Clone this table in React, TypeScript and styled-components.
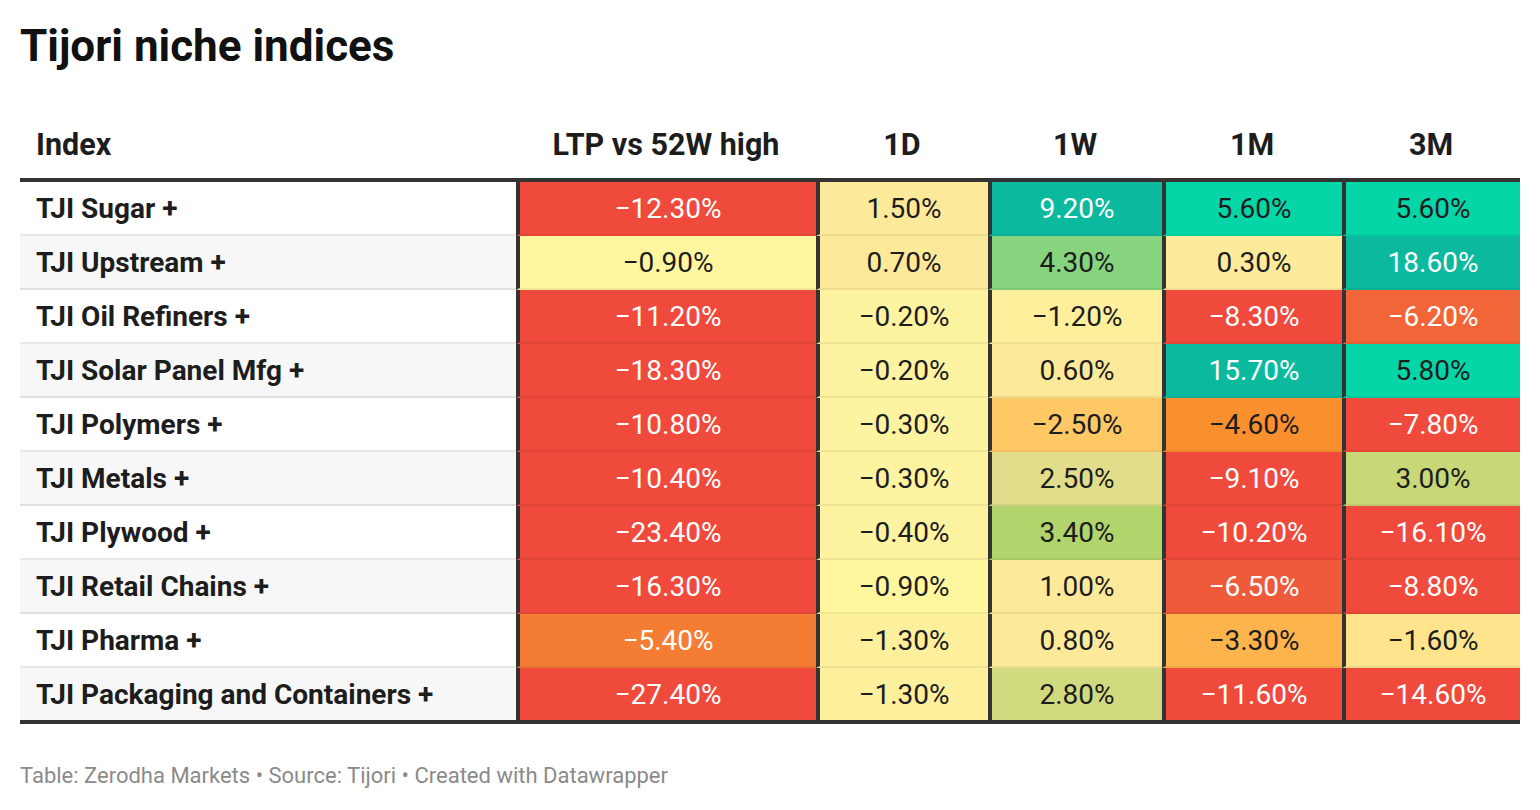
import React from "react";
import styled, { createGlobalStyle } from "styled-components";

const Global = createGlobalStyle`
  html, body {
    margin: 0;
    padding: 0;
    background: #ffffff;
  }
  body {
    font-family: Roboto, "Liberation Sans", Arial, sans-serif;
    color: #1d1d1d;
  }
`;

const COLS = "496px 300px 172px 174px 180px 178px";

const Page = styled.div`
  width: 1500px;
  padding: 0 20px;
`;

const Title = styled.h1`
  margin: 20px 0 0;
  font-size: 44px;
  line-height: 52px;
  font-weight: 700;
  color: #111111;
`;

const Table = styled.div`
  margin-top: 56px;
  width: 1500px;
  border-bottom: 4px solid #333333;
`;

const HeadRow = styled.div`
  display: grid;
  grid-template-columns: ${COLS};
  border-bottom: 4px solid #333333;
`;

const HeadCell = styled.div<{ $left?: boolean }>`
  padding: 0 16px 16px;
  font-size: 30.5px;
  line-height: 34px;
  font-weight: 700;
  color: #1d1d1d;
  text-align: ${(p) => (p.$left ? "left" : "center")};
  white-space: nowrap;
`;

const Row = styled.div`
  display: grid;
  grid-template-columns: ${COLS};
`;

const NameCell = styled.div<{ $stripe: boolean; $last: boolean }>`
  box-sizing: border-box;
  height: ${(p) => (p.$last ? 52 : 54)}px;
  padding: 0 16px;
  display: flex;
  align-items: center;
  font-size: 28px;
  font-weight: 700;
  color: #1d1d1d;
  white-space: nowrap;
  background: ${(p) => (p.$stripe ? "#f7f7f7" : "#ffffff")};
  border-bottom: ${(p) => (p.$last ? "none" : "2px solid rgba(0,0,0,0.09)")};
`;

const ValueCell = styled.div<{ $bg: string; $light: boolean; $last: boolean }>`
  box-sizing: border-box;
  height: ${(p) => (p.$last ? 52 : 54)}px;
  display: flex;
  align-items: center;
  justify-content: center;
  font-size: 28px;
  font-weight: 400;
  white-space: nowrap;
  background: ${(p) => p.$bg};
  color: ${(p) => (p.$light ? "#ffffff" : "#1d1d1d")};
  border-left: 4px solid #333333;
  border-bottom: ${(p) => (p.$last ? "none" : "2px solid rgba(0,0,0,0.06)")};
`;

const Footer = styled.div`
  margin-top: 40px;
  font-size: 22px;
  line-height: 24px;
  color: #8a8a8a;
`;

const RED = "#ef4a3c";
const TEAL = "#0bb99f";
const MINT = "#04d6a8";
const PALE = "#fde99a";
const LEMON = "#fef3a0";

type Cell = [string, string, boolean];

const rows: { name: string; cells: Cell[] }[] = [
  {
    name: "TJI Sugar +",
    cells: [
      ["−12.30%", RED, true],
      ["1.50%", PALE, false],
      ["9.20%", TEAL, true],
      ["5.60%", MINT, false],
      ["5.60%", MINT, false],
    ],
  },
  {
    name: "TJI Upstream +",
    cells: [
      ["−0.90%", "#fff69f", false],
      ["0.70%", PALE, false],
      ["4.30%", "#86d47e", false],
      ["0.30%", "#fdeb9c", false],
      ["18.60%", TEAL, true],
    ],
  },
  {
    name: "TJI Oil Refiners +",
    cells: [
      ["−11.20%", RED, true],
      ["−0.20%", LEMON, false],
      ["−1.20%", "#fdef9c", false],
      ["−8.30%", RED, true],
      ["−6.20%", "#f26539", true],
    ],
  },
  {
    name: "TJI Solar Panel Mfg +",
    cells: [
      ["−18.30%", RED, true],
      ["−0.20%", LEMON, false],
      ["0.60%", PALE, false],
      ["15.70%", TEAL, true],
      ["5.80%", MINT, false],
    ],
  },
  {
    name: "TJI Polymers +",
    cells: [
      ["−10.80%", RED, true],
      ["−0.30%", LEMON, false],
      ["−2.50%", "#fec864", false],
      ["−4.60%", "#fa8f2e", false],
      ["−7.80%", RED, true],
    ],
  },
  {
    name: "TJI Metals +",
    cells: [
      ["−10.40%", RED, true],
      ["−0.30%", LEMON, false],
      ["2.50%", "#e1dd8a", false],
      ["−9.10%", RED, true],
      ["3.00%", "#c8d777", false],
    ],
  },
  {
    name: "TJI Plywood +",
    cells: [
      ["−23.40%", RED, true],
      ["−0.40%", LEMON, false],
      ["3.40%", "#b1d46c", false],
      ["−10.20%", RED, true],
      ["−16.10%", RED, true],
    ],
  },
  {
    name: "TJI Retail Chains +",
    cells: [
      ["−16.30%", RED, true],
      ["−0.90%", "#fff69d", false],
      ["1.00%", PALE, false],
      ["−6.50%", "#ef5a3a", true],
      ["−8.80%", RED, true],
    ],
  },
  {
    name: "TJI Pharma +",
    cells: [
      ["−5.40%", "#f57c33", true],
      ["−1.30%", "#feef9c", false],
      ["0.80%", PALE, false],
      ["−3.30%", "#fdb44c", false],
      ["−1.60%", "#fee48d", false],
    ],
  },
  {
    name: "TJI Packaging and Containers +",
    cells: [
      ["−27.40%", RED, true],
      ["−1.30%", "#feef9c", false],
      ["2.80%", "#d2da80", false],
      ["−11.60%", RED, true],
      ["−14.60%", RED, true],
    ],
  },
];

const headers = ["LTP vs 52W high", "1D", "1W", "1M", "3M"];

export default function App() {
  return (
    <>
      <Global />
      <Page>
        <Title>Tijori niche indices</Title>
        <Table>
          <HeadRow>
            <HeadCell $left>Index</HeadCell>
            {headers.map((h) => (
              <HeadCell key={h}>{h}</HeadCell>
            ))}
          </HeadRow>
          {rows.map((r, i) => {
            const last = i === rows.length - 1;
            return (
              <Row key={r.name}>
                <NameCell $stripe={i % 2 === 1} $last={last}>
                  {r.name}
                </NameCell>
                {r.cells.map(([v, bg, light], j) => (
                  <ValueCell key={j} $bg={bg} $light={light} $last={last}>
                    {v}
                  </ValueCell>
                ))}
              </Row>
            );
          })}
        </Table>
        <Footer>
          Table: Zerodha Markets • Source: Tijori • Created with Datawrapper
        </Footer>
      </Page>
    </>
  );
}
